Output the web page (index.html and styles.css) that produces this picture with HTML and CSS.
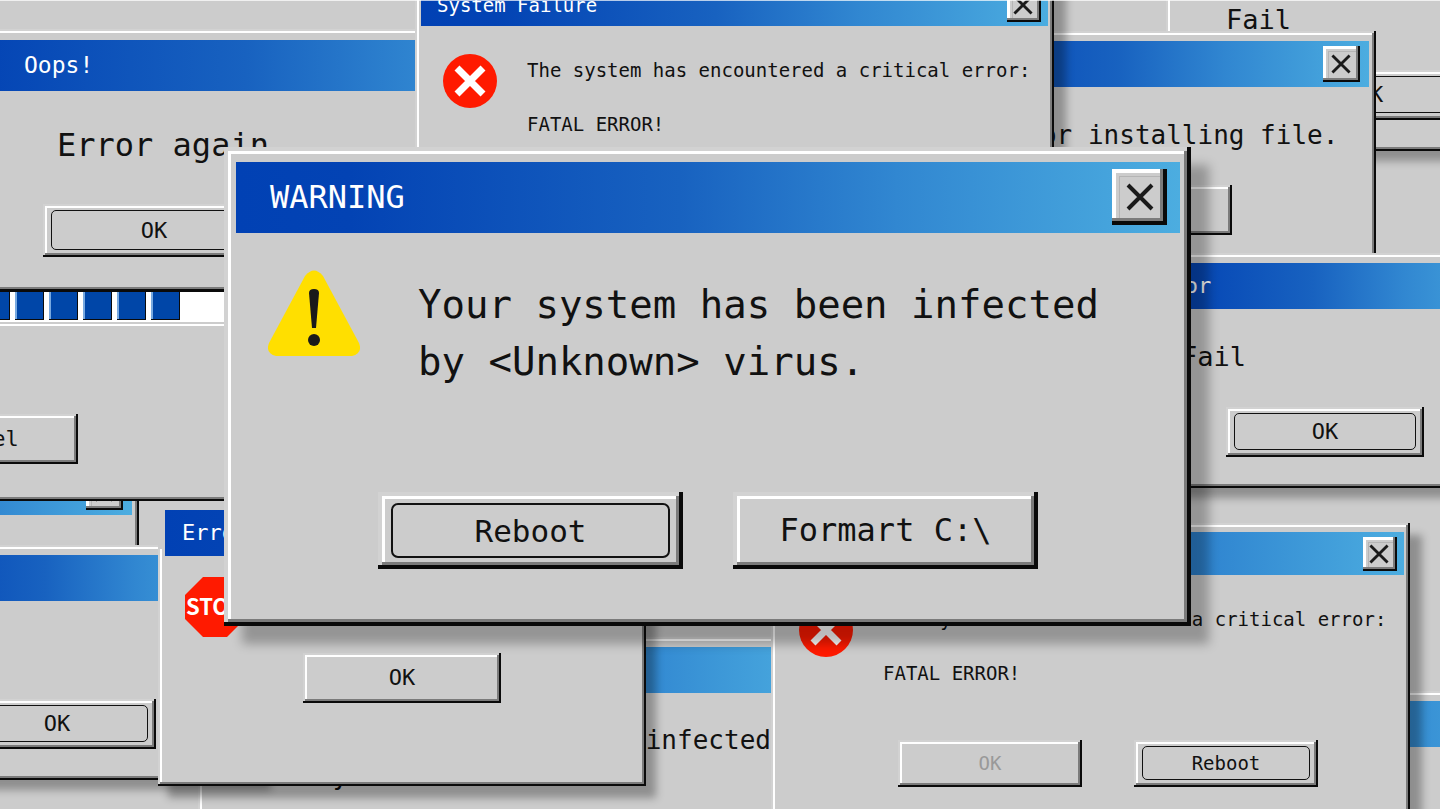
FILE: index.html
```
<!DOCTYPE html>
<html lang="en">
<head>
  <meta charset="UTF-8">
  <meta name="viewport" content="width=device-width, initial-scale=1.0">
  <title>WARNING</title>
  <link rel="stylesheet" href="styles.css">
</head>
<body>
<svg class="sprite" aria-hidden="true">
  <symbol id="cross" viewBox="0 0 28 28">
    <path d="M2 2 26 26M26 2 2 26" fill="none" stroke="#1a1a1a" stroke-width="4"/>
  </symbol>
  <symbol id="fatal" viewBox="0 0 54 54">
    <circle cx="27" cy="27" r="27" fill="#ff1a00"/>
    <path d="M14 14 40 40M40 14 14 40" fill="none" stroke="#fff" stroke-width="7"/>
  </symbol>
</svg>
<main class="desktop">

  <section class="window fail fail-top">
    <div class="titlebar">Error</div>
    <p class="message">Fail</p>
    <div class="actions"><button class="button focused"><span>OK</span></button></div>
  </section>

  <section class="window install">
    <div class="titlebar">Error
      <button class="close" aria-label="Close"><svg><use href="#cross"/></svg></button>
    </div>
    <p class="message">Error installing file.</p>
    <div class="actions"><button class="button">OK</button></div>
  </section>

  <section class="window fail fail-right">
    <div class="titlebar">Error</div>
    <p class="message">Fail</p>
    <div class="actions"><button class="button focused"><span>OK</span></button></div>
  </section>

  <section class="window corner">
    <div class="titlebar"></div>
  </section>

  <section class="window virus">
    <div class="titlebar">WARNING</div>
    <p class="message">Your system has been infected<br>by &lt;Unknown&gt; virus.</p>
  </section>

  <section class="window fatal fatal-bottom">
    <div class="titlebar">System Failure
      <button class="close" aria-label="Close"><svg><use href="#cross"/></svg></button>
    </div>
    <div class="content">
      <svg class="icon"><use href="#fatal"/></svg>
      <div class="lines">
        <p>The system has encountered a critical error:</p>
        <p>FATAL ERROR!</p>
      </div>
    </div>
    <div class="actions">
      <button class="button" disabled>OK</button>
      <button class="button focused"><span>Reboot</span></button>
    </div>
  </section>

  <section class="window strip">
    <div class="titlebar">Error
      <button class="close" aria-label="Close"><svg><use href="#cross"/></svg></button>
    </div>
  </section>

  <section class="window fail fail-left">
    <div class="titlebar">Error</div>
    <p class="message">Fail</p>
    <div class="actions"><button class="button focused"><span>OK</span></button></div>
  </section>

  <section class="window stop">
    <div class="titlebar">Error</div>
    <div class="stop-sign">STOP</div>
    <div class="actions"><button class="button">OK</button></div>
  </section>

  <section class="window oops">
    <div class="titlebar">Oops!</div>
    <p class="message">Error again</p>
    <button class="button focused"><span>OK</span></button>
    <div class="progress" role="progressbar" aria-label="Progress">
      <i></i><i></i><i></i><i></i><i></i><i></i><i></i><i></i><i></i>
    </div>
    <button class="button cancel">Cancel</button>
  </section>

  <section class="window fatal fatal-top">
    <div class="titlebar">System Failure
      <button class="close" aria-label="Close"><svg><use href="#cross"/></svg></button>
    </div>
    <div class="content">
      <svg class="icon"><use href="#fatal"/></svg>
      <div class="lines">
        <p>The system has encountered a critical error:</p>
        <p>FATAL ERROR!</p>
      </div>
    </div>
  </section>

  <section class="window warning">
    <div class="titlebar">WARNING
      <button class="close" aria-label="Close"><svg><use href="#cross"/></svg></button>
    </div>
    <div class="content">
      <svg class="icon" viewBox="0 0 92 86">
        <path d="M37 6Q46-5 55 6L91 73Q95 83 84 86H8Q-3 83 1 73Z" fill="#ffdf00"/>
        <path d="M41 23Q41 19 46 19T51 23L48 58H44Z" fill="#1a1a1a"/>
        <circle cx="46" cy="70" r="6" fill="#1a1a1a"/>
      </svg>
      <p class="message">Your system has been infected<br>by &lt;Unknown&gt; virus.</p>
    </div>
    <div class="actions">
      <button class="button focused"><span>Reboot</span></button>
      <button class="button">Formart C:\</button>
    </div>
  </section>

</main>
</body>
</html>
```
FILE: styles.css
```
* {
  box-sizing: border-box;
}
body {
  margin: 0;
  font-family: "DejaVu Sans Mono", "Liberation Mono", monospace;
  color: #111;
}
p {
  margin: 0;
}
.sprite {
  display: none;
}
.desktop {
  position: relative;
  height: 100vh;
  overflow: hidden;
  background-color: #ccc;
}
.desktop::after {
  content: "";
  position: absolute;
  top: 0;
  left: 0;
  right: 0;
  height: 1px;
  background-color: rgba(255, 255, 255, 0.7);
}

/* raised edge, shared by windows and buttons */
.window,
.button {
  --edge: 2px;
  --edge2: 4px;
  --drop: 0 0 0 transparent;
  background-color: #ccc;
  box-shadow:
    inset calc(-1 * var(--edge)) calc(-1 * var(--edge)) #0a0a0a,
    inset var(--edge) var(--edge) #d2d2d2,
    inset calc(-1 * var(--edge2)) calc(-1 * var(--edge2)) #7b7b7b,
    inset var(--edge2) var(--edge2) #fff,
    var(--drop);
}
.window {
  position: absolute;
  display: flex;
  flex-direction: column;
  padding: 10px 7px 31px;
}
.titlebar {
  display: flex;
  align-items: center;
  justify-content: space-between;
  flex-shrink: 0;
  height: 46px;
  padding: 0 9px 0 17px;
  font-size: 22px;
  line-height: 32px;
  color: #fff;
  background: linear-gradient(90deg, #0141b4, #0343b4 12%, #1862c0 47%, #3187d1 70%, #4cade0);
}
.message {
  font-size: 26px;
  line-height: 35px;
  white-space: nowrap;
}
.actions {
  display: flex;
  justify-content: center;
  margin-top: auto;
}
.content {
  display: flex;
}
.icon {
  flex-shrink: 0;
}

.button {
  display: flex;
  align-items: center;
  justify-content: center;
  width: 198px;
  height: 50px;
  padding: 0 0 2px;
  border: none;
  font-family: inherit;
  font-size: 22px;
  color: #111;
  cursor: pointer;
}
.button.focused {
  align-items: stretch;
  justify-content: stretch;
  padding: 6px 8px 7px;
}
.button.focused span {
  display: flex;
  align-items: center;
  justify-content: center;
  flex: 1;
  border: 1px solid #111;
  border-radius: 5px;
}
.button:disabled {
  color: #999;
}
.close {
  display: flex;
  align-items: center;
  justify-content: center;
  width: 37px;
  height: 36px;
  padding: 0 2px 0 0;
  border: none;
  background-color: #ccc;
  box-shadow:
    inset -2px -2px #0a0a0a,
    inset -4px -4px #7b7b7b,
    inset 3px 3px #fff,
    inset 5px 5px #ccc,
    inset 6px 6px #b5b5b5,
    inset -6px -6px #ccc;
}
.close svg {
  width: 20px;
  height: 20px;
}

/* windows */
.fail {
  --drop: 10px 10px 8px rgba(0, 0, 0, 0.3);
  width: 408px;
  height: 235px;
}
.fail .message {
  padding: 30px 53px 0;
  font-size: 27px;
}
.fail-top {
  left: 1166px;
  top: -84px;
}
.fail-right {
  left: 1121px;
  top: 253px;
}
.fail-left {
  left: -147px;
  top: 545px;
}
.install {
  left: 890px;
  top: 31px;
  width: 486px;
  height: 235px;
}
.install .message {
  padding: 31px 0 0 97px;
}
.corner {
  left: 1050px;
  top: 691px;
  width: 486px;
  height: 235px;
}
.virus {
  left: 198px;
  top: 637px;
  width: 632px;
  height: 320px;
}
.virus .message {
  padding: 30px 0 0 112px;
}
.fatal {
  --drop: 12px 12px 8px rgba(0, 0, 0, 0.3);
  width: 639px;
  height: 316px;
  padding: 9px 6px 52px;
}
.fatal .titlebar {
  height: 43px;
  padding: 0 7px 0 16px;
  font-size: 19px;
}
.fatal .close {
  width: 34px;
  height: 34px;
}
.fatal .content {
  gap: 30px;
  padding: 28px 22px 0;
}
.fatal .icon {
  width: 54px;
  height: 54px;
}
.fatal .lines {
  font-size: 19px;
  line-height: 27px;
  white-space: nowrap;
}
.fatal .lines p {
  margin: 3px 0 27px;
}
.fatal .actions {
  justify-content: flex-end;
  gap: 52px;
  padding-right: 86px;
}
.fatal .button {
  width: 184px;
  height: 47px;
  font-size: 19px;
}
.fatal-top {
  left: 415px;
  top: -26px;
}
.fatal-bottom {
  left: 771px;
  top: 523px;
}
.strip {
  left: -347px;
  top: 459px;
  width: 486px;
  height: 120px;
}
.stop {
  --drop: 10px 12px 8px rgba(0, 0, 0, 0.3);
  left: 158px;
  top: 496px;
  width: 488px;
  height: 290px;
  padding-top: 14px;
  padding-bottom: 83px;
}
.stop::before {
  content: "";
  position: absolute;
  left: 0;
  top: 0;
  width: 7px;
  height: 53px;
  background-color: #ccc;
}
.stop-sign {
  display: flex;
  align-items: center;
  justify-content: center;
  width: 60px;
  height: 60px;
  margin: 21px 20px 0;
  padding-bottom: 4px;
  font-family: "Noto Sans CJK JP", "Noto Sans", sans-serif;
  font-size: 22px;
  font-weight: bold;
  color: #fff;
  background-color: #ff1a00;
  clip-path: polygon(30% 0, 70% 0, 100% 30%, 100% 70%, 70% 100%, 30% 100%, 0 70%, 0 30%);
}
.oops {
  left: -130px;
  top: 29px;
  width: 800px;
  height: 472px;
  padding-top: 11px;
}
.oops .titlebar {
  height: 51px;
  padding: 0 0 2px 147px;
  font-size: 23px;
}
.oops .message {
  padding: 32px 0 0 180px;
  font-size: 32px;
  line-height: 44px;
}
.oops .button {
  width: 222px;
  height: 53px;
  margin: 37px 0 0 166px;
}
.oops .button.cancel {
  width: 198px;
  height: 50px;
  margin: 88px 0 0 3px;
}
.progress {
  display: flex;
  gap: 5px;
  height: 39px;
  margin-top: 30px;
  padding: 5px 0 0 2px;
  background-color: #fff;
  box-shadow:
    inset 0 2px #7b7b7b,
    inset 0 5px #0a0a0a,
    inset 0 -2px #fff,
    inset 0 -4px #ccc;
}
.progress i {
  width: 29px;
  height: 28px;
  background-color: #0046a8;
  box-shadow:
    inset -1px -1px #0a0a0a,
    inset 2px 0 #78a9e0;
}
.warning {
  --edge: 4px;
  --edge2: 7px;
  --drop: 18px 18px 10px rgba(0, 0, 0, 0.27);
  left: 224px;
  top: 147px;
  width: 967px;
  height: 479px;
  padding: 15px 11px 57px 12px;
}
.warning .titlebar {
  height: 71px;
  padding: 0 13px 2px 34px;
  font-size: 32px;
}
.warning .close {
  width: 55px;
  height: 56px;
  padding: 0;
  box-shadow:
    inset -4px -4px #0a0a0a,
    inset -7px -7px #7b7b7b,
    inset 4px 4px #fff,
    inset 7px 7px #ccc,
    inset 8px 8px #b5b5b5,
    inset -11px -11px #ccc;
}
.warning .close svg {
  width: 28px;
  height: 28px;
}
.warning .content {
  gap: 58px;
  padding: 37px 32px 0;
}
.warning .icon {
  width: 92px;
  height: 86px;
}
.warning .message {
  padding-top: 6px;
  font-size: 39px;
  line-height: 57px;
}
.warning .actions {
  gap: 50px;
}
.warning .button {
  --edge: 4px;
  --edge2: 7px;
  width: 305px;
  height: 77px;
  font-size: 32px;
}
.warning .focused {
  padding: 11px 13px;
  font-size: 31px;
}
.warning .focused span {
  border-width: 2px;
  border-radius: 7px;
}
```
